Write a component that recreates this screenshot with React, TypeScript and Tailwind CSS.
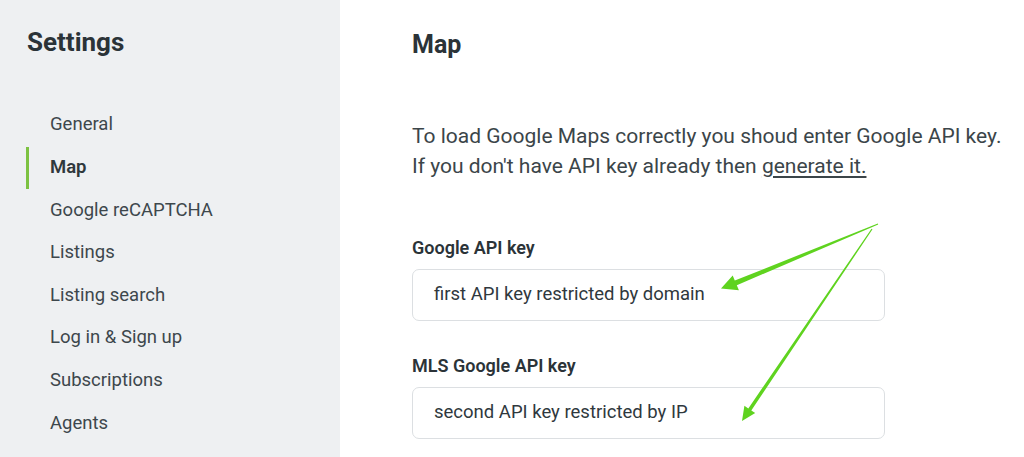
import React from "react";

const menu = [
  "General",
  "Map",
  "Google reCAPTCHA",
  "Listings",
  "Listing search",
  "Log in & Sign up",
  "Subscriptions",
  "Agents",
  "Agencies",
];

const Field: React.FC<{ label: string; value: string; className?: string }> = ({ label, value, className }) => (
  <div className={`flex flex-col ${className ?? ""}`}>
    <label className="text-[18px] font-semibold text-[#2b3338] leading-[20px]">{label}</label>
    <div className="mt-[11px] h-[52px] w-[473px] rounded-[7px] border border-[#dcdfe2] bg-white flex items-center px-[21px]">
      <span className="text-[18.5px] text-[#2f383d]">{value}</span>
    </div>
  </div>
);

export default function App() {
  return (
    <div
      className="relative flex h-[457px] w-[1024px] overflow-hidden bg-white"
      style={{ fontFamily: "Roboto, 'Noto Sans', sans-serif" }}
    >
      <aside className="w-[340px] shrink-0 bg-[#eef0f2] pl-[26px]">
        <h1 className="ml-[1px] pt-[27px] text-[26px] font-bold leading-[30px] text-[#2b3338]">Settings</h1>
        <nav className="mt-[47px] flex flex-col">
          {menu.map((item) => {
            const active = item === "Map";
            return (
              <div key={item} className="flex h-[42.6px] items-center">
                <div className={`h-[42px] w-[3px] ${active ? "bg-[#7cc242]" : "bg-transparent"}`} />
                <span
                  className={`pl-[21px] text-[18.5px] ${active ? "font-semibold text-[#2f383d]" : "text-[#3d474c]"}`}
                >
                  {item}
                </span>
              </div>
            );
          })}
        </nav>
      </aside>

      <main className="flex-1 pl-[72px]">
        <h2 className="pt-[31px] text-[25px] font-bold leading-[28px] text-[#2b3338]">Map</h2>
        <p className="mt-[62px] text-[21px] leading-[30px] text-[#3b4549]">
          To load Google Maps correctly you shoud enter Google API key.
          <br />
          If you don't have API key already then{" "}
          <span className="underline underline-offset-[3px]">generate it.</span>
        </p>
        <Field className="mt-[57px]" label="Google API key" value="first API key restricted by domain" />
        <Field className="mt-[35px]" label="MLS Google API key" value="second API key restricted by IP" />
      </main>

      <svg
        className="pointer-events-none absolute inset-0"
        width="1024"
        height="457"
        viewBox="0 0 1024 457"
      >
        <polygon
          fill="#5fd31f"
          points="878.2,224.6 736.8,285.2 738.9,290.3 721,288.5 732.7,275.5 734.8,280.6 877.8,223.4"
        />
        <polygon
          fill="#5fd31f"
          points="872.5,229.3 751.3,410.4 755.2,413.1 742,421 744.4,405.7 748.3,408.4 871.5,228.7"
        />
      </svg>
    </div>
  );
}
